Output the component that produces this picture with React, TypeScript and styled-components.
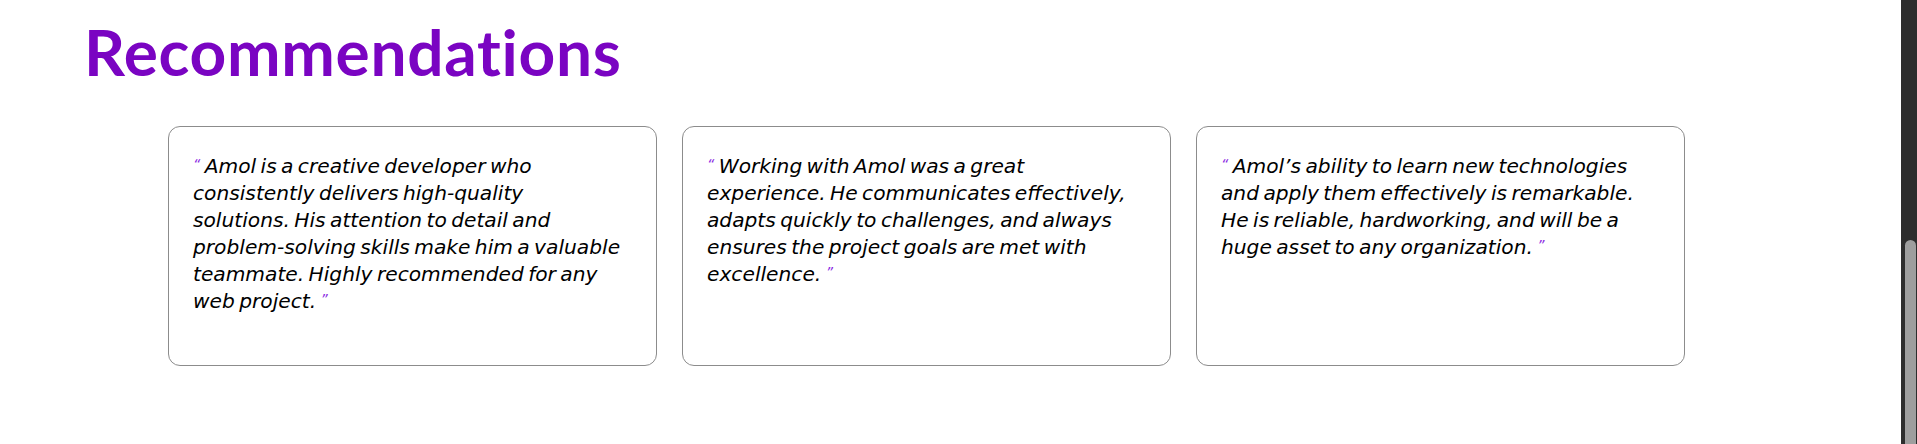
import React from "react";
import styled, { createGlobalStyle } from "styled-components";

const GlobalStyle = createGlobalStyle`
  html, body {
    margin: 0;
    background: #ffffff;
    overflow: hidden;
  }
  body {
    font-family: "DejaVu Sans", "Liberation Sans", sans-serif;
  }
`;

const Page = styled.div`
  display: flex;
  flex-direction: column;
  width: 1901px;
`;

const Section = styled.section`
  display: flex;
  flex-direction: column;
  padding: 14px 0 60px;
`;

const Heading = styled.h2`
  margin: 0;
  padding-left: 84px;
  font-family: "Lato", "Liberation Sans", sans-serif;
  font-weight: 700;
  font-size: 64px;
  line-height: 1.2;
  color: #7a04c2;
  letter-spacing: 0.7px;
`;

const CardRow = styled.div`
  display: flex;
  gap: 25px;
  margin-top: 35px;
  padding-left: 168px;
`;

const Card = styled.article`
  box-sizing: border-box;
  width: 489px;
  height: 240px;
  padding: 26px 33.5px 24px 24px;
  border: 1px solid #8c8c8c;
  border-radius: 12px;
  background: #ffffff;
`;

const Quote = styled.p`
  margin: 0;
  font-family: "DejaVu Sans", "Liberation Sans", sans-serif;
  font-style: italic;
  font-size: 20.2px;
  line-height: 27px;
  word-spacing: -2px;
  color: #000000;
`;

const Mark = styled.span`
  font-size: 14px;
  line-height: 0;
  vertical-align: 4px;
  color: #8a2be2;
`;

const ScrollTrack = styled.div`
  position: fixed;
  top: 0;
  right: 0;
  width: 16px;
  height: 100vh;
  background: #2d2d2d;
  display: flex;
  flex-direction: column;
  justify-content: flex-end;
  align-items: flex-end;
`;

const ScrollThumb = styled.div`
  width: 11px;
  height: 204px;
  margin-right: 1px;
  background: #9e9e9e;
  border-radius: 6px 6px 0 0;
`;

const recommendations = [
  "Amol is a creative developer who consistently delivers high-quality solutions. His attention to detail and problem-solving skills make him a valuable teammate. Highly recommended for any web project.",
  "Working with Amol was a great experience. He communicates effectively, adapts quickly to challenges, and always ensures the project goals are met with excellence.",
  "Amol\u2019s ability to learn new technologies and apply them effectively is remarkable. He is reliable, hardworking, and will be a huge asset to any organization.",
];

export default function App() {
  return (
    <>
      <GlobalStyle />
      <Page>
        <Section>
          <Heading>Recommendations</Heading>
          <CardRow>
            {recommendations.map((text) => (
              <Card key={text}>
                <Quote>
                  <Mark>{"\u201C"}</Mark> {text} <Mark>{"\u201D"}</Mark>
                </Quote>
              </Card>
            ))}
          </CardRow>
        </Section>
      </Page>
      <ScrollTrack>
        <ScrollThumb />
      </ScrollTrack>
    </>
  );
}
